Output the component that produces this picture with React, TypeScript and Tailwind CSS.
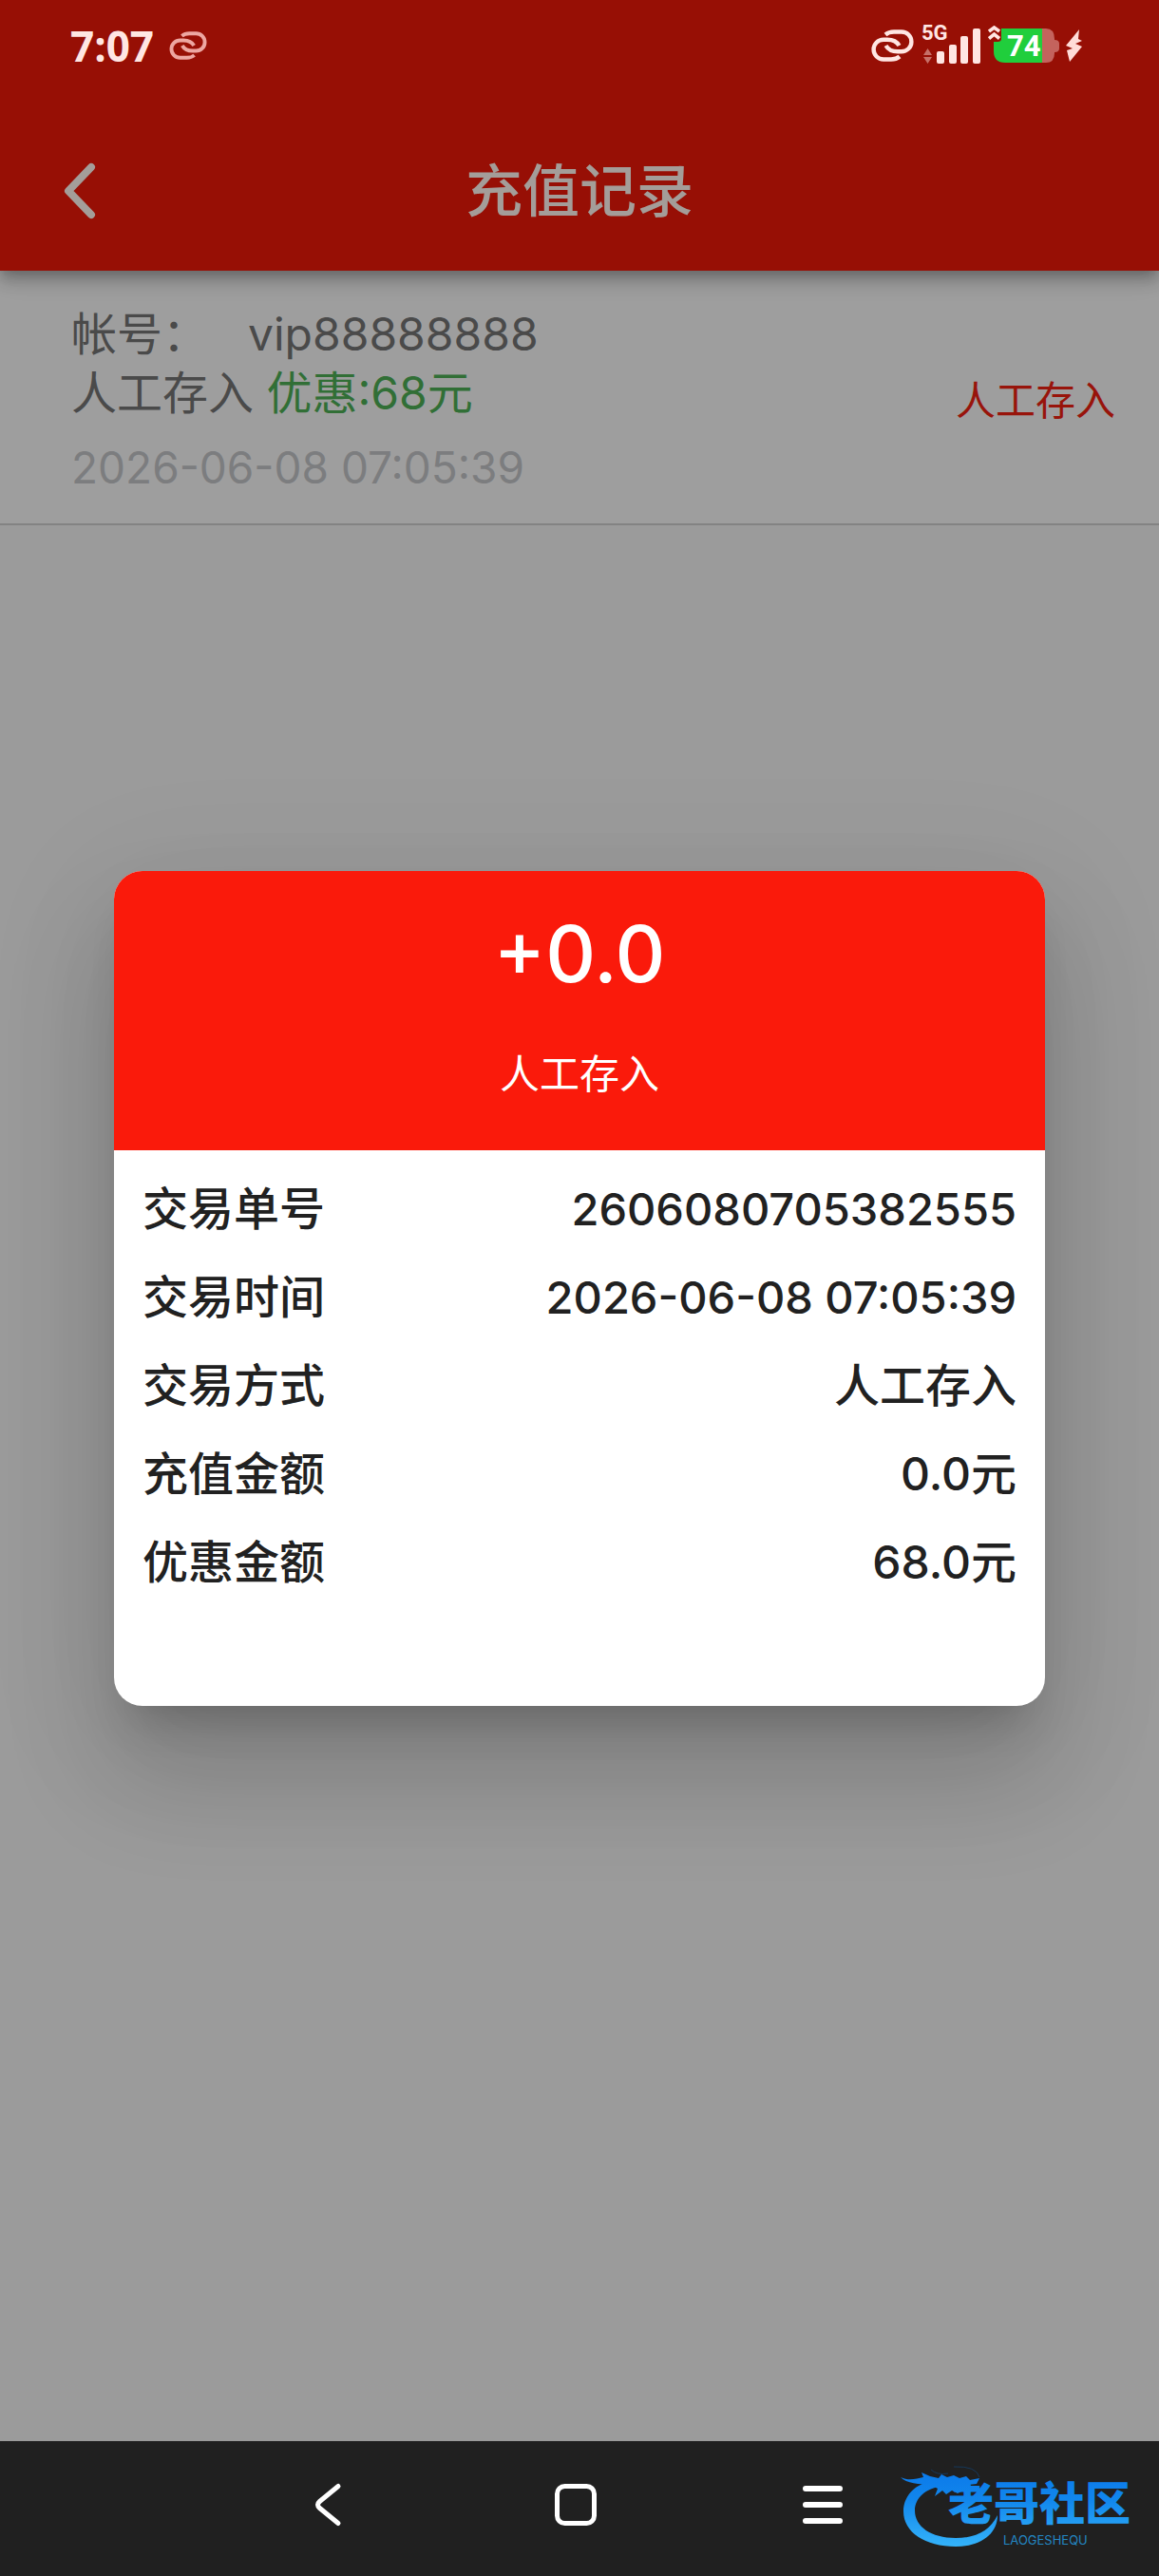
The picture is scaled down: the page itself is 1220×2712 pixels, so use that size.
interface RecordItem {
  account: string;
  method: string;
  bonus: string;
  time: string;
}

interface DetailRow {
  label: string;
  value: string;
  numeric?: boolean;
}

const record: RecordItem = {
  account: 'vip88888888',
  method: '人工存入',
  bonus: '优惠:68元',
  time: '2026-06-08 07:05:39',
};

const details: DetailRow[] = [
  { label: '交易单号', value: '2606080705382555', numeric: true },
  { label: '交易时间', value: '2026-06-08 07:05:39', numeric: true },
  { label: '交易方式', value: '人工存入' },
  { label: '充值金额', value: '0.0元' },
  { label: '优惠金额', value: '68.0元' },
];

function LinkIcon({ className }: { className: string }) {
  return (
    <svg viewBox="0 0 45 34" fill="none" stroke="currentColor" strokeWidth="4.4" className={className}>
      <path d="M15 5.5Q18.5 2.5 24 2.5H32A10.4 10.4 0 0 1 32 23.3H28Q19 23.3 15.5 17" />
      <path d="M30 28.5Q26.5 31.5 21 31.5H13A10.4 10.4 0 0 1 13 10.7H17Q26 10.7 29.5 17" />
    </svg>
  );
}

function SignalIcon() {
  return (
    <svg viewBox="0 -8 62 58" className="h-[58px] w-[62px]" fill="#ffe6e3">
      <text x="0" y="15" fontSize="22" fontWeight="700" fontFamily="Roboto, sans-serif">
        5G
      </text>
      <path d="M6.5 24L11 31H2zM6.5 40L11 33H2z" opacity=".45" />
      <rect x="16" y="27" width="8" height="13" rx="2" />
      <rect x="29" y="20" width="8" height="20" rx="2" />
      <rect x="41" y="11" width="8" height="29" rx="2" />
      <rect x="54" y="3" width="8" height="37" rx="2" />
    </svg>
  );
}

function BatteryIcon() {
  return (
    <svg viewBox="0 0 100 42" className="h-[42px] w-[100px]">
      <path d="M57 3H61Q70 3 70 14V15Q75 15 75 19V24Q75 28 70 28V29Q70 39 61 39H57z" fill="#c4635d" />
      <path d="M57 3H6V27Q6 39 18 39H57z" fill="#20ce3c" />
      <path d="M0 0H14V14Q14 17 10 17H6V14H0z" fill="#970f05" />
      <path d="M1 6L6.5 2L12 6M1 13.5L6.5 9L12 13.5" fill="none" stroke="#ffe6e3" strokeWidth="3.6" />
      <text x="20" y="32" fontSize="31" fontWeight="700" fontFamily="Roboto, sans-serif" fill="#fff">
        74
      </text>
      <path d="M96 4L82 21L89 24L83 26L86 38L99 22L92 19L99 16L95 14z" fill="#ffdcd8" />
    </svg>
  );
}

function StatusBar() {
  return (
    <div className="flex h-24 items-center justify-between pr-20 pl-[74px]">
      <div className="flex items-center gap-4 text-[#ffe6e3]">
        <span className="font-['Open_Sans',sans-serif] text-[44px] leading-[60px] font-bold">7:07</span>
        <LinkIcon className="h-[30px] w-[40px] text-[#eda7a2]" />
      </div>
      <div className="flex items-center gap-2 text-[#ffe6e3]">
        <LinkIcon className="h-[34px] w-[45px]" />
        <SignalIcon />
        <BatteryIcon />
      </div>
    </div>
  );
}

function Header() {
  return (
    <header className="relative z-10 bg-[#970f05] shadow-[0_6px_12px_-3px_rgba(0,0,0,0.2),0_12px_15px_0_rgba(0,0,0,0.14),0_3px_30px_0_rgba(0,0,0,0.12)]">
      <StatusBar />
      <div className="grid h-[189px] grid-cols-[1fr_auto_1fr] items-start pt-[65px] text-[#a49d99]">
        <button type="button" aria-label="返回" className="ml-[66px] w-9">
          <svg viewBox="0 0 36 80" className="h-20 w-9" fill="none" stroke="currentColor" strokeWidth="8" strokeLinecap="round" strokeLinejoin="round">
            <path d="M30 15L6 40L30 65" />
          </svg>
        </button>
        <h1 className="text-[60px] leading-[80px] font-medium">充值记录</h1>
      </div>
    </header>
  );
}

function RecordCard({ item }: { item: RecordItem }) {
  return (
    <article className="flex items-center justify-between border-b-2 border-[#838383] bg-[#9e9e9e] pt-9 pr-[46px] pb-7 pl-[75px] text-[48px] leading-[62px] text-[#4a4a4a]">
      <div>
        <p className="flex gap-[42px]">
          <span>帐号：</span>
          <span>{item.account}</span>
        </p>
        <p>
          {item.method} <span className="text-[#316f36]">{item.bonus}</span>
        </p>
        <time className="mt-4 block text-[46px] text-[#7c7d7f]">{item.time}</time>
      </div>
      <span className="text-[42px] text-[#98140b]">{item.method}</span>
    </article>
  );
}

function DetailDialog() {
  return (
    <div className="absolute inset-0 z-20 flex items-center justify-center px-[120px]">
      <section
        role="dialog"
        aria-label="交易详情"
        className="w-full overflow-hidden rounded-[30px] bg-white shadow-[0_33px_45px_-21px_rgba(0,0,0,0.2),0_72px_114px_9px_rgba(0,0,0,0.14),0_27px_138px_24px_rgba(0,0,0,0.06)]"
      >
        <div className="bg-[#fa1a0b] pt-8 pb-[50px] text-center text-white">
          <h2 className="text-[82px] leading-[112px] font-medium">+0.0</h2>
          <p className="mt-10 text-[42px] leading-[60px]">人工存入</p>
        </div>
        <dl className="px-[30px] pt-4 pb-[104px] text-[48px] font-medium text-[#212121]">
          {details.map((row) => (
            <div key={row.label} className="flex h-[93px] items-center justify-between">
              <dt>{row.label}</dt>
              <dd className={row.numeric ? 'text-[47px]' : ''}>{row.value}</dd>
            </div>
          ))}
        </dl>
      </section>
    </div>
  );
}

function NavBar() {
  return (
    <nav className="flex h-[142px] items-start justify-center bg-[#202020] pt-[35px] pr-2 text-white">
      <button type="button" aria-label="后退" className="flex w-[260px] justify-center">
        <svg viewBox="0 0 64 64" className="h-16 w-16" fill="none" stroke="currentColor" strokeWidth="5" strokeLinecap="round">
          <path d="M42 12.5L22.5 28.5Q18.5 32 22.5 35.5L42 51.5" />
        </svg>
      </button>
      <button type="button" aria-label="主页" className="flex w-[260px] justify-center">
        <svg viewBox="0 0 64 64" className="h-16 w-16" fill="none" stroke="currentColor" strokeWidth="5">
          <rect x="12.5" y="12.5" width="39" height="39" rx="8" />
        </svg>
      </button>
      <button type="button" aria-label="菜单" className="flex w-[260px] justify-center">
        <svg viewBox="0 0 64 64" className="h-16 w-16" fill="none" stroke="currentColor" strokeWidth="6" strokeLinecap="round">
          <path d="M14 15H50M14 32H50M14 49H50" />
        </svg>
      </button>
    </nav>
  );
}

function CommunityLogo() {
  return (
    <svg viewBox="0 0 260 96" className="absolute right-[16px] bottom-[26px] z-30 h-[96px] w-[260px]" fill="url(#logo-blue)">
      <defs>
        <linearGradient id="logo-blue" gradientUnits="userSpaceOnUse" x1="0" y1="8" x2="0" y2="92">
          <stop offset="0" stopColor="#0a78ea" />
          <stop offset=".4" stopColor="#1186ec" />
          <stop offset="1" stopColor="#35b4fa" />
        </linearGradient>
      </defs>
      {/* dragon body */}
      <path d="M46 20C22 22 7 36 7 54C7 76 30 91 62 91C88 91 106 78 106 58C98 74 84 82 62 82C36 82 19 70 19 53C19 40 30 30 48 27z" />
      {/* dragon head */}
      <path d="M4 18C12 22 20 20 28 18L26 13L35 17L44 19L47 15L53 18L60 16L66 19L73 17L77 21L87 19L84 25L75 26L85 29L82 33L72 31L64 35L58 32L52 36L48 32L40 38L43 30L36 26C24 25 10 25 4 18z" />
      <path d="M36 10Q42 16 54 14M60 7Q84 6 87 18" fill="none" stroke="#16385a" strokeWidth="1" />
      <text x="54" y="63" fontSize="48" fontWeight="900" fontFamily="'Noto Sans CJK SC', sans-serif">
        老哥社区
      </text>
      <text x="112" y="89" fontSize="13" fontFamily="Inter, sans-serif" fill="#2387c4">
        LAOGESHEQU
      </text>
    </svg>
  );
}

export default function App() {
  return (
    <div className="relative flex min-h-screen flex-col bg-[#9b9b9b] font-[Inter,'Noto_Sans_CJK_SC',sans-serif]">
      <Header />
      <main className="flex-1">
        <RecordCard item={record} />
      </main>
      <NavBar />
      <DetailDialog />
      <CommunityLogo />
    </div>
  );
}
